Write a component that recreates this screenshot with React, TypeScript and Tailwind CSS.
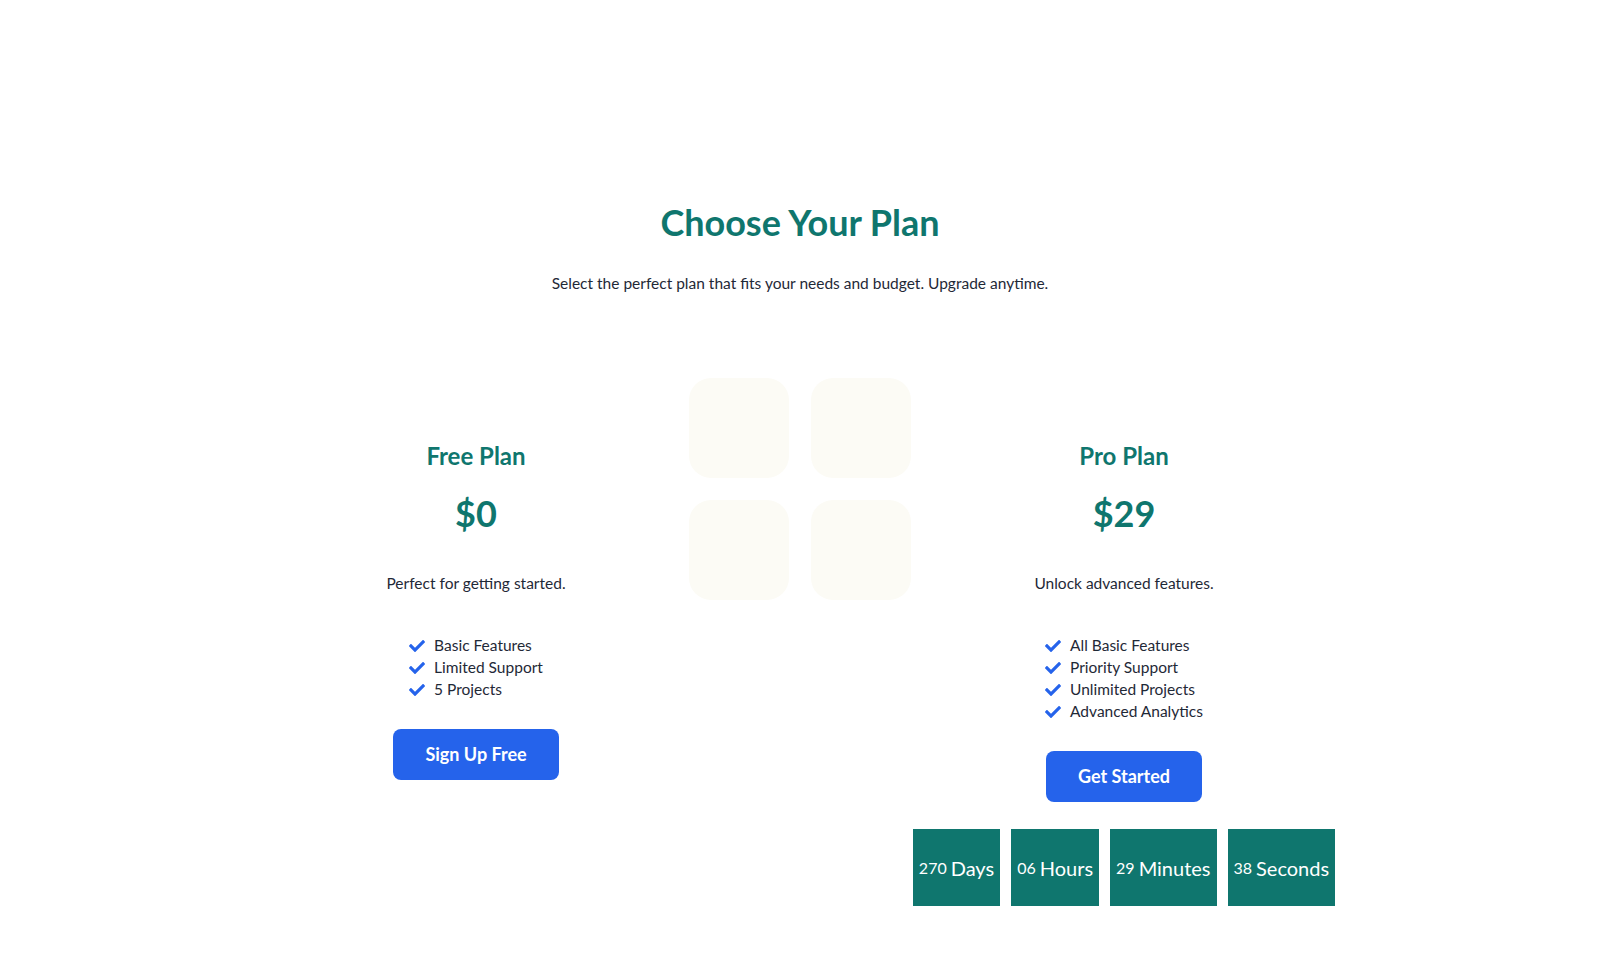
import { FaCheck } from 'react-icons/fa'

const font = { fontFamily: 'Lato, "Noto Sans", sans-serif' }

interface PlanProps {
  title: string
  price: string
  blurb: string
  features: string[]
  cta: string
  children?: React.ReactNode
}

function Plan({ title, price, blurb, features, cta, children }: PlanProps) {
  return (
    <div className="flex flex-col items-center pt-[62px]">
      <h2 className="text-[24px] leading-8 font-bold text-[#0f766e]">{title}</h2>
      <div className="mt-[21px] text-[36px] leading-10 font-bold text-[#0f766e]">{price}</div>
      <p className="mt-[38px] text-[15.5px] leading-6 text-[#1f2937]">{blurb}</p>
      <ul className="mt-[40px] flex flex-col">
        {features.map((f) => (
          <li key={f} className="flex h-[22px] items-center gap-[9px] text-[15.5px] text-[#1f2937]">
            <FaCheck className="h-4 w-4 text-[#2563eb]" />
            {f}
          </li>
        ))}
      </ul>
      <button className="mt-[28px] h-[51px] rounded-lg bg-[#2563eb] px-8 text-[18px] font-bold text-white">
        {cta}
      </button>
      {children}
    </div>
  )
}

function GridIcon() {
  return (
    <svg width="222" height="222" viewBox="0 0 222 222" fill="#fcfbf5">
      <rect x="0" y="0" width="100" height="100" rx="22" />
      <rect x="122" y="0" width="100" height="100" rx="22" />
      <rect x="0" y="122" width="100" height="100" rx="22" />
      <rect x="122" y="122" width="100" height="100" rx="22" />
    </svg>
  )
}

const countdown = [
  { n: '270', label: 'Days' },
  { n: '06', label: 'Hours' },
  { n: '29', label: 'Minutes' },
  { n: '38', label: 'Seconds' },
]

export default function App() {
  return (
    <div style={font} className="flex min-h-screen flex-col items-center bg-white pt-[202px]">
      <h1 className="text-[36px] leading-10 font-bold text-[#0f766e]">Choose Your Plan</h1>
      <p className="mt-[29px] text-[15.5px] leading-6 text-[#1f2937]">
        Select the perfect plan that fits your needs and budget. Upgrade anytime.
      </p>

      <div className="mt-[83px] grid w-[972px] grid-cols-3">
        <Plan
          title="Free Plan"
          price="$0"
          blurb="Perfect for getting started."
          features={['Basic Features', 'Limited Support', '5 Projects']}
          cta="Sign Up Free"
        />
        <div className="flex justify-center">
          <GridIcon />
        </div>
        <Plan
          title="Pro Plan"
          price="$29"
          blurb="Unlock advanced features."
          features={['All Basic Features', 'Priority Support', 'Unlimited Projects', 'Advanced Analytics']}
          cta="Get Started"
        >
          <div className="mt-[27px] flex gap-[11px]">
            {countdown.map((c) => (
              <div
                key={c.label}
                className="flex h-[77px] items-center bg-[#0f766e] px-[6px] whitespace-nowrap text-white"
              >
                <span className="text-[16px]">{c.n}</span>
                <span className="ml-[4px] text-[20px]">{c.label}</span>
              </div>
            ))}
          </div>
        </Plan>
      </div>
    </div>
  )
}
